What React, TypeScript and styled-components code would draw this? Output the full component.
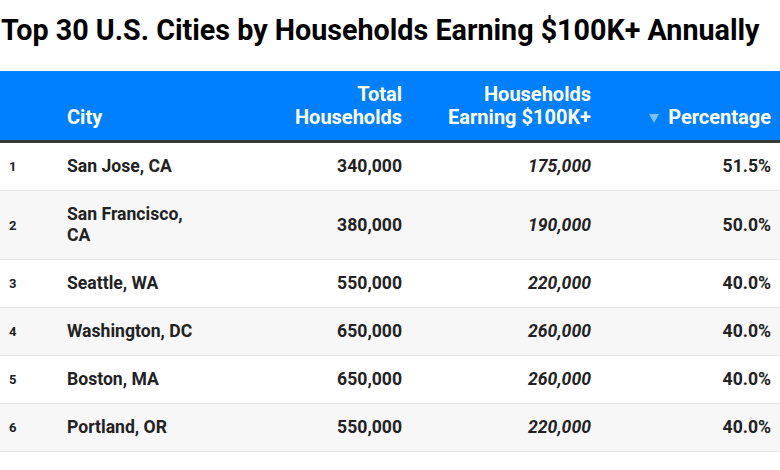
import React from "react";
import styled, { createGlobalStyle } from "styled-components";

const Global = createGlobalStyle`
  html, body { margin: 0; padding: 0; background: #fff; }
  body { font-family: Roboto, "Noto Sans", Arial, sans-serif; color: #222; }
`;

const Page = styled.div`
  width: 780px;
`;

const Title = styled.h1`
  margin: 0;
  padding: 13px 0 0 1px;
  height: 71px;
  box-sizing: border-box;
  font-size: 28.7px;
  line-height: 34px;
  font-weight: 700;
  color: #000;
  white-space: nowrap;
`;

const Table = styled.table`
  width: 780px;
  border-collapse: collapse;
  table-layout: fixed;
`;

const HeadRow = styled.tr`
  background: #0080ff;
  border-bottom: 3px solid #383838;
`;

const Th = styled.th<{ $align?: "left" | "right"; $padLeft?: number }>`
  height: 69px;
  box-sizing: border-box;
  padding: 12px 9px 11px ${(p) => p.$padLeft ?? 9}px;
  vertical-align: bottom;
  text-align: ${(p) => p.$align ?? "left"};
  color: #fff;
  font-size: 20px;
  line-height: 23px;
  font-weight: 700;
`;

const SortArrow = styled.span`
  display: inline-block;
  width: 0;
  height: 0;
  border-left: 5px solid transparent;
  border-right: 5px solid transparent;
  border-top: 9px solid #7fbfff;
  margin-right: 9px;
  vertical-align: 1px;
`;

const Row = styled.tr<{ $alt: boolean }>`
  background: ${(p) => (p.$alt ? "#f7f7f7" : "#fff")};
  border-bottom: 1px solid #e4e4e4;
`;

const Td = styled.td<{ $align?: "left" | "right"; $italic?: boolean }>`
  padding: 13px 9px;
  text-align: ${(p) => p.$align ?? "left"};
  font-style: ${(p) => (p.$italic ? "italic" : "normal")};
  font-size: 17.6px;
  line-height: 21px;
  font-weight: 700;
  color: #222;
  vertical-align: middle;
`;

const RankCell = styled(Td)`
  font-size: 13px;
  font-weight: 700;
`;

const rows = [
  { rank: 1, city: "San Jose, CA", total: "340,000", high: "175,000", pct: "51.5%" },
  { rank: 2, city: "San Francisco, CA", total: "380,000", high: "190,000", pct: "50.0%" },
  { rank: 3, city: "Seattle, WA", total: "550,000", high: "220,000", pct: "40.0%" },
  { rank: 4, city: "Washington, DC", total: "650,000", high: "260,000", pct: "40.0%" },
  { rank: 5, city: "Boston, MA", total: "650,000", high: "260,000", pct: "40.0%" },
  { rank: 6, city: "Portland, OR", total: "550,000", high: "220,000", pct: "40.0%" },
];

export default function App() {
  return (
    <Page>
      <Global />
      <Title>Top 30 U.S. Cities by Households Earning $100K+ Annually</Title>
      <Table>
        <colgroup>
          <col style={{ width: 58 }} />
          <col style={{ width: 150 }} />
          <col style={{ width: 203 }} />
          <col style={{ width: 189 }} />
          <col style={{ width: 180 }} />
        </colgroup>
        <thead>
          <HeadRow>
            <Th></Th>
            <Th>City</Th>
            <Th $align="right" $padLeft={40}>
              Total Households
            </Th>
            <Th $align="right">Households Earning $100K+</Th>
            <Th $align="right">
              <SortArrow />
              Percentage
            </Th>
          </HeadRow>
        </thead>
        <tbody>
          {rows.map((r, i) => (
            <Row key={r.rank} $alt={i % 2 === 1}>
              <RankCell>{r.rank}</RankCell>
              <Td>{r.city}</Td>
              <Td $align="right">{r.total}</Td>
              <Td $align="right" $italic>
                {r.high}
              </Td>
              <Td $align="right">{r.pct}</Td>
            </Row>
          ))}
        </tbody>
      </Table>
    </Page>
  );
}
